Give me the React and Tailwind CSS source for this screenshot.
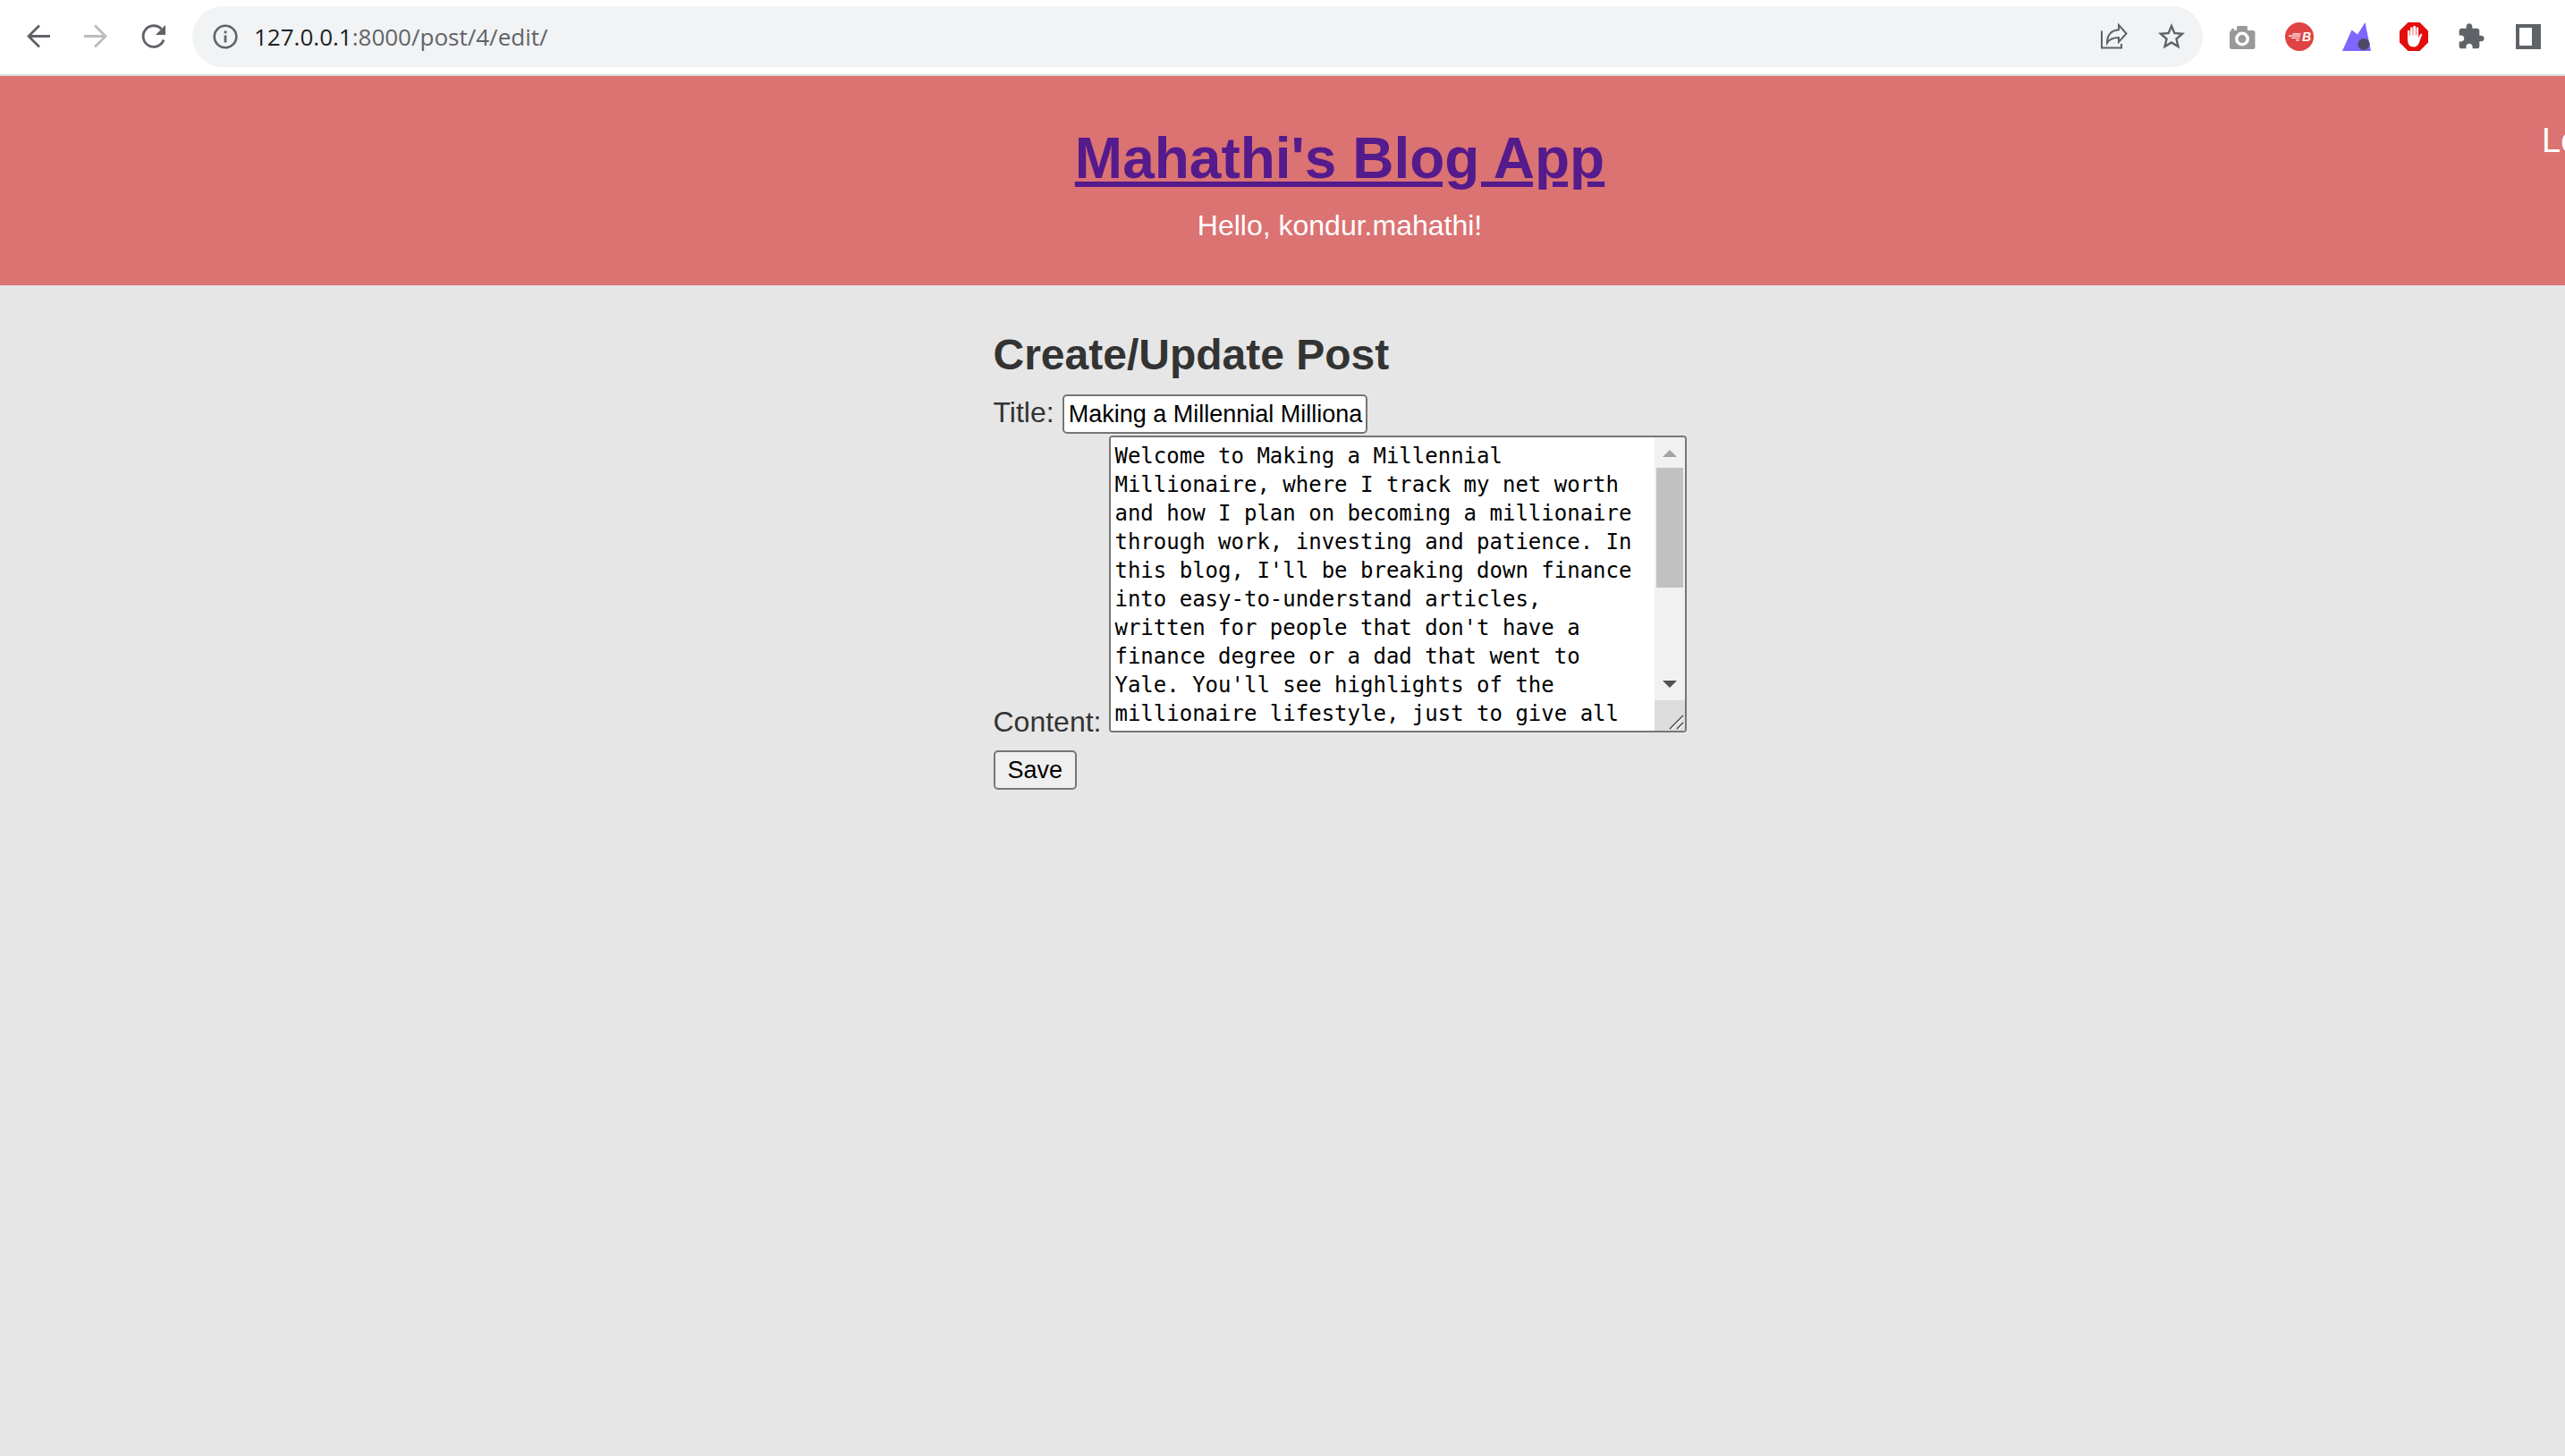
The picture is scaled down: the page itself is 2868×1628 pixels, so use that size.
import React from "react";

function IconButton({ label, className = "", children }) {
  return (
    <button type="button" aria-label={label} className={`flex size-8 items-center justify-center ${className}`}>
      {children}
    </button>
  );
}

function BackIcon() {
  return (
    <svg viewBox="0 0 32 32" className="size-8 shrink-0" fill="none" stroke="currentColor" strokeWidth="2.8">
      <path d="M29 15.500H5M17 3.500L5 15.500L17 27.500" />
    </svg>
  );
}

function ForwardIcon() {
  return (
    <svg viewBox="0 0 32 32" className="size-8 shrink-0" fill="none" stroke="currentColor" strokeWidth="2.8">
      <path d="M3 15.500H27M15 3.500L27 15.500L15 27.500" />
    </svg>
  );
}

function ReloadIcon() {
  return (
    <svg viewBox="0 0 32 32" className="size-8 shrink-0" fill="none">
      <path d="M28 19.500A11.800 11.800 0 1 1 25.500 7.500" stroke="currentColor" strokeWidth="2.8" />
      <path d="M30 3V14H19Z" fill="currentColor" />
    </svg>
  );
}

function InfoIcon() {
  return (
    <svg viewBox="0 0 28 28" className="size-7 shrink-0" fill="none">
      <circle cx="14" cy="14" r="12.300" stroke="currentColor" strokeWidth="2.600" />
      <path d="M14 12.500V20.500M14 7.500V10.200" stroke="currentColor" strokeWidth="2.800" />
    </svg>
  );
}

function ShareIcon() {
  return (
    <svg viewBox="0 0 32 32" className="size-8 shrink-0" fill="none" stroke="currentColor" strokeWidth="2">
      <path d="M2 9.500V28.500H24V24" />
      <path d="M21 3L29.500 12.500L21 22V17C14 17 10.500 19 8 23C8 14 13 9 21 8.200Z" />
    </svg>
  );
}

function StarIcon() {
  return (
    <svg viewBox="0 0 24 24" className="size-9 shrink-0" fill="currentColor">
      <path d="M22 9.240l-7.190-.620L12 2 9.190 8.630 2 9.240l5.460 4.730L5.820 21 12 17.270 18.180 21l-1.630-7.030L22 9.240zM12 15.400l-3.760 2.270 1-4.280-3.320-2.880 4.380-.380L12 6.100l1.710 4.040 4.380.380-3.320 2.880 1 4.280L12 15.400z" />
    </svg>
  );
}

function CameraIcon() {
  return (
    <svg viewBox="0 0 32 32" className="size-8 shrink-0">
      <path d="M4 9V7.500q1.500-1.500 3 0V9h3V5.500Q10 4 11.500 4h9Q22 4 22 5.500V9h6q2.500 0 2.500 2.500v16q0 2.500-2.500 2.500H4.500Q2 30 2 27.500v-16Q2 9 4 9Z" fill="#999999" />
      <circle cx="16" cy="18.500" r="6.200" fill="#999999" stroke="#ffffff" strokeWidth="3.500" />
    </svg>
  );
}

function SpeedBadgeIcon() {
  return (
    <span className="relative flex size-8 shrink-0 items-center justify-end rounded-full bg-[#e04344] pr-[3px]">
      <svg viewBox="0 0 32 32" className="absolute inset-0 size-8" stroke="#ffffff" strokeWidth="1.200">
        <path d="M8.500 12.800H17.500M4 15.200H17M7 17.500H16.500M12 19.800H16" />
      </svg>
      <span className="relative font-['Liberation_Sans'] text-[14px] leading-8 font-bold text-white italic">B</span>
    </span>
  );
}

function MountainIcon() {
  return (
    <svg viewBox="0 0 32 32" className="size-8 shrink-0">
      <path d="M0 32L10.500 8.500L17 13.500L25.500 0L32 32Z" fill="#7f66ff" />
      <circle cx="24" cy="24.500" r="6.300" fill="#4c4a68" stroke="#6b4a80" strokeWidth="1" />
    </svg>
  );
}

function StopHandIcon() {
  return (
    <svg viewBox="0 0 32 32" className="size-8 shrink-0">
      <path d="M9.500 0H22.500L32 9.500V22.500L22.500 32H9.500L0 22.500V9.500Z" fill="#e40d0d" />
      <path
        d="M9 9.500q1.300-1.500 2.500 0V15h.6V6q1.300-1.700 2.600 0v8.500h.6V4.600q1.400-1.600 2.700 0v9.900h.6V6q1.300-1.600 2.500 0v11.500l1.600-3.500q1.300-2 2.700-1L22 22.500Q20 27.500 16 27.500Q9 27.500 9 19.500Z"
        fill="#ffffff"
      />
    </svg>
  );
}

function PuzzleIcon() {
  return (
    <svg viewBox="0 0 24 24" className="size-8 shrink-0" fill="currentColor">
      <path d="M20.500 11H19V7c0-1.100-.9-2-2-2h-4V3.500C13 2.120 11.880 1 10.500 1S8 2.120 8 3.500V5H4c-1.100 0-1.990.9-1.990 2v3.800H3.500c1.490 0 2.700 1.210 2.700 2.700s-1.210 2.700-2.700 2.700H2V20c0 1.100.9 2 2 2h3.800v-1.500c0-1.490 1.210-2.700 2.700-2.700 1.490 0 2.700 1.210 2.700 2.700V22H17c1.100 0 2-.9 2-2v-4h1.500c1.380 0 2.500-1.120 2.500-2.500S21.880 11 20.500 11z" />
    </svg>
  );
}

function SidePanelIcon() {
  return (
    <svg viewBox="0 0 28 28" className="size-7 shrink-0">
      <path fillRule="evenodd" d="M0 0H28V28H0ZM4 4V24H18V4Z" fill="currentColor" />
    </svg>
  );
}

function BrowserToolbar() {
  return (
    <div className="flex items-center border-b-2 border-[#d9d9dc] bg-white pt-[7px] pr-[25px] pb-2 pl-[27px] text-[#5f6368]">
      <div className="flex gap-8">
        <IconButton label="Back"><BackIcon /></IconButton>
        <IconButton label="Forward" className="text-[#babcbe]"><ForwardIcon /></IconButton>
        <IconButton label="Reload"><ReloadIcon /></IconButton>
      </div>
      <div className="ml-7 flex h-[68px] grow items-center rounded-full bg-[#f1f3f4] pr-[19px] pl-[21px]">
        <IconButton label="View site information"><InfoIcon /></IconButton>
        <div aria-label="Address" className="ml-4 grow font-['Open_Sans',sans-serif] text-[26px] leading-9">
          <span className="text-[#202124]">127.0.0.1</span>:8000/post/4/edit/
        </div>
        <div className="flex gap-8">
          <IconButton label="Share this page"><ShareIcon /></IconButton>
          <IconButton label="Bookmark this page"><StarIcon /></IconButton>
        </div>
      </div>
      <div className="ml-7 flex gap-8">
        <IconButton label="Screenshot"><CameraIcon /></IconButton>
        <IconButton label="Speed test"><SpeedBadgeIcon /></IconButton>
        <IconButton label="Analytics"><MountainIcon /></IconButton>
        <IconButton label="Ad blocker"><StopHandIcon /></IconButton>
        <IconButton label="Extensions"><PuzzleIcon /></IconButton>
        <IconButton label="Side panel"><SidePanelIcon /></IconButton>
      </div>
    </div>
  );
}

function SiteHeader() {
  return (
    <header className="grid grid-cols-[1fr_auto_1fr] bg-[#db7373] pt-12 pb-12 pl-32 text-white">
      <div className="col-start-2 text-center">
        <h1 className="text-[64px] leading-[88px] font-bold">
          <a href="#home" className="text-[#551a8b] underline">Mahathi's Blog App</a>
        </h1>
        <p className="mt-3 text-[32px] leading-[38px]">Hello, kondur.mahathi!</p>
      </div>
      <nav className="flex w-[26px] justify-start justify-self-end overflow-hidden">
        <a href="#logout" className="text-[38px] leading-[48px]">Logout</a>
      </nav>
    </header>
  );
}

const POST_CONTENT =
  "Welcome to Making a Millennial Millionaire, where I track my net worth and how I plan on becoming a millionaire through work, investing and patience. In this blog, I'll be breaking down finance into easy-to-understand articles, written for people that don't have a finance degree or a dad that went to Yale. You'll see highlights of the millionaire lifestyle, just to give all";

function ContentField() {
  return (
    <div className="flex h-[332px] overflow-hidden rounded-[4px] border-2 border-[#767676] bg-white">
      <textarea
        id="content"
        defaultValue={POST_CONTENT}
        className="w-[608px] resize-none overflow-hidden bg-white pt-[5px] pr-4 pl-1 font-['DejaVu_Sans_Mono',monospace] text-[24px] leading-8 text-black outline-none"
      />
      <div aria-hidden="true" className="flex w-[34px] flex-col bg-[#f1f1f1]">
        <svg viewBox="0 0 34 34" className="size-[34px]"><path d="M9 22L17 14L25 22Z" fill="#a3a3a3" /></svg>
        <div className="mx-[2px] h-[134px] bg-[#c1c1c1]" />
        <svg viewBox="0 0 34 34" className="mt-auto size-[34px]"><path d="M9 12L17 20L25 12Z" fill="#505050" /></svg>
        <svg viewBox="0 0 34 34" className="size-[34px] bg-[#dcdcdc]" fill="none" strokeWidth="1.500">
          <path d="M19 32L32 19M27 32L32 27" stroke="#ffffff" />
          <path d="M17 32L32 17M25 32L32 25" stroke="#505050" />
        </svg>
      </div>
    </div>
  );
}

function PostForm() {
  return (
    <main className="flex justify-center pt-[46px] pl-32 text-[#333333]">
      <form className="w-[775px]" onSubmit={(event) => event.preventDefault()}>
        <h2 className="text-[48px] leading-[64px] font-bold">Create/Update Post</h2>
        <div className="mt-3 flex items-baseline gap-[9px]">
          <label htmlFor="title" className="text-[32px] leading-9">Title:</label>
          <input
            id="title"
            defaultValue="Making a Millennial Millionaire"
            className="h-11 w-[341px] rounded-[5px] border-2 border-[#767676] bg-white pr-[3px] pl-[5px] text-[27px] leading-8 text-black"
          />
        </div>
        <div className="mt-[2px] flex items-end gap-[9px]">
          <label htmlFor="content" className="text-[32px] leading-6">Content:</label>
          <ContentField />
        </div>
        <button
          type="submit"
          className="mt-5 h-11 rounded-[5px] border-2 border-[#767676] bg-[#efefef] px-[14px] text-[27px] leading-8 text-black"
        >
          Save
        </button>
      </form>
    </main>
  );
}

export default function App() {
  return (
    <div className="min-h-screen overflow-x-hidden bg-[#e6e6e6] font-['Liberation_Sans',Arial,sans-serif]">
      <BrowserToolbar />
      <SiteHeader />
      <PostForm />
    </div>
  );
}
